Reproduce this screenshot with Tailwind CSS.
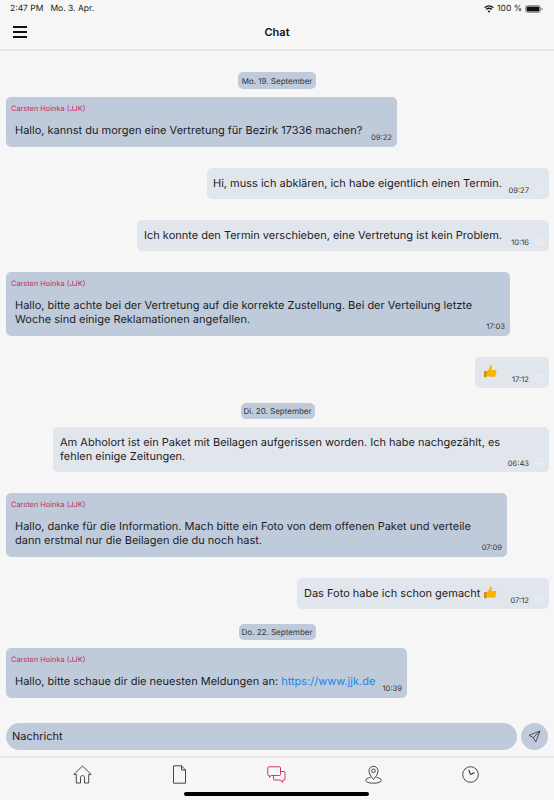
<!DOCTYPE html>
<html lang="de">
<head>
    <meta charset="UTF-8">
    <meta name="viewport" content="width=device-width, initial-scale=1.0">
    <script src="https://cdn.jsdelivr.net/npm/@tailwindcss/browser@4"></script>
    <title>Chat</title>
</head>
<body class="bg-[#f6f6f6] text-[#1c1c1e] font-['Inter',sans-serif] [text-rendering:geometricPrecision]">
<div class="w-[554px] h-[800px] overflow-hidden flex flex-col relative">

    <!-- status bar -->
    <div class="h-[16px] px-[10px] pt-[2px] flex justify-between items-center text-[8.5px] text-[#222]">
        <div class="flex gap-[7px]"><span>2:47 PM</span><span>Mo. 3. Apr.</span></div>
        <div class="flex items-center gap-[3px] pr-[1px]">
            <svg width="10" height="8" viewBox="0 0 10 8" fill="none" stroke="#111" stroke-width="1.200"><path d="M.6 2.800Q5 -1 9.400 2.800M2.200 4.500Q5 2 7.800 4.500"/><path d="M5 7.800 3.600 6.200Q5 5 6.400 6.200Z" fill="#111" stroke="none"/></svg>
            <span>100 %</span>
            <svg width="18" height="8" viewBox="0 0 18 8"><rect x="0.5" y="0.5" width="15" height="7" rx="2" fill="none" stroke="#999"/><rect x="1.5" y="1.5" width="13" height="5" rx="1" fill="#111"/><rect x="16.3" y="2.7" width="1.2" height="2.6" rx="0.6" fill="#999"/></svg>
        </div>
    </div>

    <!-- header -->
    <div class="h-[33px] flex items-center justify-center relative border-b-2 border-[#e6e6e6] box-content">
        <svg class="absolute left-[13px] top-[10px]" width="14" height="12" viewBox="0 0 14 12"><path d="M0 1h14M0 6h14M0 11h14" stroke="#111" stroke-width="2"/></svg>
        <span class="text-[11px] font-semibold text-[#111] mt-[-1px]">Chat</span>
    </div>

    <!-- messages -->
    <div class="flex-1 px-[5px] flex flex-col items-stretch">
        <div class="self-center mt-[21px] h-[17px] w-[78px] rounded-[5px] bg-[#bfcbdb] text-[8px] text-[#333] whitespace-nowrap flex items-center justify-center">Mo. 19. September</div>

        <div class="self-start mt-[8px] ml-px w-[391px] h-[50px] rounded-[5px] bg-[#bfcbdb] relative">
            <div class="absolute left-[5px] top-[6px] text-[7.4px] text-[#c8275f]">Carsten Hoinka (JJK)</div>
            <div class="absolute left-[9px] top-[25px] text-[11px] leading-[17px] whitespace-nowrap">Hallo, kannst du morgen eine Vertretung für Bezirk 17336 machen?</div>
            <div class="absolute right-[5px] bottom-[4px] text-[7.6px] text-[#333]">09:22</div>
        </div>

        <div class="self-end mt-[21px] w-[342px] h-[31px] rounded-[5px] bg-[#e1e6ed] relative">
            <div class="absolute left-[6px] top-[7px] text-[11px] leading-[17px] whitespace-nowrap">Hi, muss ich abklären, ich habe eigentlich einen Termin.</div>
            <div class="absolute right-[20px] bottom-[3px] text-[7.6px] text-[#333]">09:27</div>
            <svg class="absolute right-[5px] bottom-[5px]" width="9" height="9" viewBox="0 0 9 9" fill="none" stroke="#eef1f5"><circle cx="4.5" cy="4.5" r="4"/><path d="M2.6 4.6 4 6l2.4-3"/></svg>
        </div>

        <div class="self-end mt-[21px] w-[412px] h-[31px] rounded-[5px] bg-[#e1e6ed] relative">
            <div class="absolute left-[7px] top-[7px] text-[11px] leading-[17px] whitespace-nowrap">Ich konnte den Termin verschieben, eine Vertretung ist kein Problem.</div>
            <div class="absolute right-[20px] bottom-[3px] text-[7.6px] text-[#333]">10:16</div>
            <svg class="absolute right-[5px] bottom-[5px]" width="9" height="9" viewBox="0 0 9 9" fill="none" stroke="#eef1f5"><circle cx="4.5" cy="4.5" r="4"/><path d="M2.6 4.6 4 6l2.4-3"/></svg>
        </div>

        <div class="self-start mt-[21px] ml-px w-[504px] h-[64px] rounded-[5px] bg-[#bfcbdb] relative">
            <div class="absolute left-[5px] top-[6px] text-[7.4px] text-[#c8275f]">Carsten Hoinka (JJK)</div>
            <div class="absolute left-[9px] top-[26px] w-[462px] text-[11px] leading-[14px]">Hallo, bitte achte bei der Vertretung auf die korrekte Zustellung. Bei der Verteilung letzte Woche sind einige Reklamationen angefallen.</div>
            <div class="absolute right-[5px] bottom-[4px] text-[7.6px] text-[#333]">17:03</div>
        </div>

        <div class="self-end mt-[21px] w-[74px] h-[31px] rounded-[5px] bg-[#e1e6ed] relative">
            <svg class="absolute left-[8px] top-[8px]" width="14" height="14" viewBox="0 0 14 14"><path d="M4 6.2 6.6 3 7 .6c1.4-.4 2.2.8 1.8 2.2L8.3 5H12.6c1 0 1.2 1.6.3 1.9.7.5.5 1.6-.2 1.8.5.6.2 1.5-.5 1.7.3.8-.2 1.4-1 1.4H6.800c-1.200 0-2-.5-2.800-.8Z" fill="#f7b500"/><rect x="1" y="6" width="2.800" height="6.200" rx=".6" fill="#e08a00"/></svg>
            <div class="absolute right-[20px] bottom-[3px] text-[7.6px] text-[#333]">17:12</div>
            <svg class="absolute right-[5px] bottom-[5px]" width="9" height="9" viewBox="0 0 9 9" fill="none" stroke="#eef1f5"><circle cx="4.5" cy="4.5" r="4"/><path d="M2.6 4.6 4 6l2.4-3"/></svg>
        </div>

        <div class="self-center mt-[15px] ml-px h-[16px] w-[74px] rounded-[5px] bg-[#bfcbdb] text-[8px] text-[#333] whitespace-nowrap flex items-center justify-center">Di. 20. September</div>

        <div class="self-end mt-[8px] w-[496px] h-[45px] rounded-[5px] bg-[#e1e6ed] relative">
            <div class="absolute left-[7px] top-[8px] w-[450px] text-[11px] leading-[14px]">Am Abholort ist ein Paket mit Beilagen aufgerissen worden. Ich habe nachgezählt, es fehlen einige Zeitungen.</div>
            <div class="absolute right-[20px] bottom-[3px] text-[7.6px] text-[#333]">06:43</div>
            <svg class="absolute right-[5px] bottom-[5px]" width="9" height="9" viewBox="0 0 9 9" fill="none" stroke="#eef1f5"><circle cx="4.5" cy="4.5" r="4"/><path d="M2.6 4.6 4 6l2.4-3"/></svg>
        </div>

        <div class="self-start mt-[21px] ml-px w-[501px] h-[64px] rounded-[5px] bg-[#bfcbdb] relative">
            <div class="absolute left-[5px] top-[6px] text-[7.4px] text-[#c8275f]">Carsten Hoinka (JJK)</div>
            <div class="absolute left-[9px] top-[26px] w-[462px] text-[11px] leading-[14px]">Hallo, danke für die Information. Mach bitte ein Foto von dem offenen Paket und verteile dann erstmal nur die Beilagen die du noch hast.</div>
            <div class="absolute right-[5px] bottom-[4px] text-[7.6px] text-[#333]">07:09</div>
        </div>

        <div class="self-end mt-[21px] w-[252px] h-[31px] rounded-[5px] bg-[#e1e6ed] relative">
            <div class="absolute left-[7px] top-[7px] text-[11px] leading-[17px] whitespace-nowrap">Das Foto habe ich schon gemacht</div>
            <svg class="absolute left-[186px] top-[8px]" width="14" height="14" viewBox="0 0 14 14"><path d="M4 6.2 6.6 3 7 .6c1.4-.4 2.2.8 1.8 2.2L8.3 5H12.6c1 0 1.2 1.6.3 1.9.7.5.5 1.6-.2 1.8.5.6.2 1.5-.5 1.7.3.8-.2 1.4-1 1.4H6.800c-1.200 0-2-.5-2.800-.8Z" fill="#f7b500"/><rect x="1" y="6" width="2.800" height="6.200" rx=".6" fill="#e08a00"/></svg>
            <div class="absolute right-[20px] bottom-[3px] text-[7.6px] text-[#333]">07:12</div>
            <svg class="absolute right-[5px] bottom-[5px]" width="9" height="9" viewBox="0 0 9 9" fill="none" stroke="#eef1f5"><circle cx="4.5" cy="4.5" r="4"/><path d="M2.6 4.6 4 6l2.4-3"/></svg>
        </div>

        <div class="self-center mt-[15px] h-[16px] w-[77px] rounded-[5px] bg-[#bfcbdb] text-[8px] text-[#333] whitespace-nowrap flex items-center justify-center">Do. 22. September</div>

        <div class="self-start mt-[8px] ml-px w-[401px] h-[50px] rounded-[5px] bg-[#bfcbdb] relative">
            <div class="absolute left-[5px] top-[6px] text-[7.4px] text-[#c8275f]">Carsten Hoinka (JJK)</div>
            <div class="absolute left-[9px] top-[25px] text-[11px] leading-[17px] whitespace-nowrap">Hallo, bitte schaue dir die neuesten Meldungen an: <span class="text-[#1a84e8]">https://www.jjk.de</span></div>
            <div class="absolute right-[5px] bottom-[4px] text-[7.6px] text-[#333]">10:39</div>
        </div>
    </div>

    <!-- input -->
    <div class="h-[33px] pl-[6px] pr-[6px] flex gap-[4px] items-start">
        <div class="w-[511px] h-[27px] rounded-full bg-[#bfcbdb] pl-[6px] flex items-center text-[11px] text-[#222]">Nachricht</div>
        <div class="w-[27px] h-[27px] rounded-full bg-[#bfcbdb] flex items-center justify-center">
            <svg width="13" height="13" viewBox="0 0 13 13" fill="none" stroke="#333" stroke-width=".8" stroke-linejoin="round"><path d="M12 1 1 5.300 5.300 7.700 7.700 12ZM12 1 5.300 7.700"/></svg>
        </div>
    </div>

    <!-- bottom nav -->
    <div class="h-[44px] border-t-2 border-[#e6e6e6] relative flex justify-around">
        <div class="absolute left-[73px] top-[7px]">
            <svg width="19" height="19" viewBox="0 0 19 19" fill="none" stroke="#333" stroke-width=".9" stroke-linejoin="round"><path d="M9.500 1 .8 9.500 3.300 9.500V18H7.500V12.300C7.500 10 11.500 10 11.500 12.300V18H15.700V9.500H18.200Z"/></svg>
        </div>
        <div class="absolute left-[173px] top-[7px]">
            <svg width="13" height="19" viewBox="0 0 13 19" fill="none" stroke="#333" stroke-width=".9" stroke-linejoin="round"><path d="M.5 .8H8.500L12.500 5V18.200H.5ZM8.500 .8V5H12.500"/></svg>
        </div>
        <div class="absolute left-[267px] top-[8px]">
            <svg width="19" height="18" viewBox="0 0 19 18" fill="none" stroke="#d6366f" stroke-width="1" stroke-linejoin="round"><path d="M1.800 .8H12.500Q13.500 .8 13.500 1.800V8.500Q13.500 9.500 12.500 9.500H4L2.500 11.500V9.500H1.800Q.8 9.500 .8 8.500V1.800Q.8 .8 1.800 .8Z"/><path d="M13.500 5.500H17Q18 5.500 18 6.500V13Q18 14 17 14H16L15.500 16.500 13.500 14H7.500Q6.500 14 6.500 13V9.500"/></svg>
        </div>
        <div class="absolute left-[365px] top-[7px]">
            <svg width="17" height="19" viewBox="0 0 17 19" fill="none" stroke="#333" stroke-width=".9"><path d="M8.500 14.500C6 11.500 4 9 4 5.800A4.500 4.500 0 0 1 13 5.800C13 9 11 11.500 8.500 14.500Z"/><circle cx="8.500" cy="5.800" r="1.800"/><path d="M5.500 12.300C2.500 13 .7 14 .7 15.400 .7 17 4 18.200 8.500 18.200S16.300 17 16.300 15.400C16.300 14 14.500 13 11.500 12.300"/></svg>
        </div>
        <div class="absolute left-[462px] top-[8px]">
            <svg width="17" height="17" viewBox="0 0 17 17" fill="none" stroke="#333" stroke-width=".9"><circle cx="8.500" cy="8.500" r="7.800"/><path d="M8.500 8.500 6.800 4M8.500 8.500 12.500 6.500" stroke-width="1.100"/></svg>
        </div>
        <div class="absolute left-[184px] top-[34px] w-[185px] h-[4px] rounded-full bg-black"></div>
    </div>
</div>
</body>
</html>
